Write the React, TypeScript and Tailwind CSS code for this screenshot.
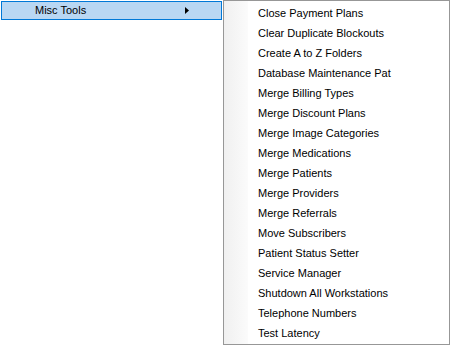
import React from 'react';

const items = [
  'Close Payment Plans',
  'Clear Duplicate Blockouts',
  'Create A to Z Folders',
  'Database Maintenance Pat',
  'Merge Billing Types',
  'Merge Discount Plans',
  'Merge Image Categories',
  'Merge Medications',
  'Merge Patients',
  'Merge Providers',
  'Merge Referrals',
  'Move Subscribers',
  'Patient Status Setter',
  'Service Manager',
  'Shutdown All Workstations',
  'Telephone Numbers',
  'Test Latency',
];

export default function App() {
  return (
    <div
      className="flex w-[450px] h-[345px] bg-white text-[11px] text-[#000000]"
      style={{ fontFamily: '"Liberation Sans", Arial, sans-serif' }}
    >
      {/* parent menu */}
      <div className="w-[223px] pt-px pl-px">
        <div className="flex items-center w-[221px] h-[19px] border border-[#0078d7] bg-[#b9d7f3]">
          <span className="pl-[33px] flex-1">Misc Tools</span>
          <svg width="4" height="7" viewBox="0 0 4 7" className="mr-[32px]">
            <path d="M0 0 L4 3.5 L0 7 Z" fill="#000" />
          </svg>
        </div>
      </div>

      {/* submenu */}
      <div className="relative w-[227px] h-[345px] border border-[#979797] bg-white pt-[2px]">
        <div className="absolute left-0 top-0 bottom-0 w-[24px] bg-gradient-to-r from-[#f0f0f0] to-[#fbfbfb]" />
        <div className="relative flex flex-col">
          {items.map((item) => (
            <div key={item} className="h-[20px] flex items-center pl-[34px] whitespace-nowrap">
              {item}
            </div>
          ))}
        </div>
      </div>
    </div>
  );
}
